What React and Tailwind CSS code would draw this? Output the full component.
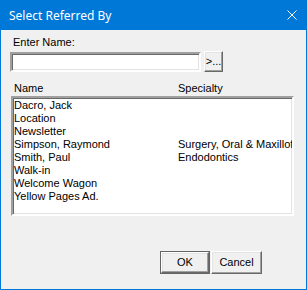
const items = [
  { name: "Dacro, Jack", specialty: "" },
  { name: "Location", specialty: "" },
  { name: "Newsletter", specialty: "" },
  { name: "Simpson, Raymond", specialty: "Surgery, Oral & Maxillofacial" },
  { name: "Smith, Paul", specialty: "Endodontics" },
  { name: "Walk-in", specialty: "" },
  { name: "Welcome Wagon", specialty: "" },
  { name: "Yellow Pages Ad.", specialty: "" },
];

const sunken =
  "border-2 border-t-[#a0a0a0] border-l-[#a0a0a0] border-b-white border-r-white shadow-[inset_1px_1px_0_#696969,inset_-1px_-1px_0_#e3e3e3]";
const raised =
  "border border-t-white border-l-white border-b-[#696969] border-r-[#696969] shadow-[inset_-1px_-1px_0_#a0a0a0,inset_1px_1px_0_#e3e3e3] bg-[#f0f0f0]";

const App = () => {
  return (
    <div className="w-[307px] h-[290px] flex flex-col bg-[#f0f0f0] border-x border-b border-[#0078d7] font-['Liberation_Sans',Arial,sans-serif] text-[11px] leading-[13px] text-black">
      <div className="h-[30px] shrink-0 -mx-px bg-[#0078d7] flex items-center justify-between pl-[9px] pr-[10px]">
        <span className="text-white text-[12px] font-['Noto_Sans',sans-serif]">Select Referred By</span>
        <svg width="10" height="10" viewBox="0 0 10 10" className="shrink-0">
          <path d="M0.5 0.5 L9.5 9.5 M9.5 0.5 L0.5 9.5" stroke="#fff" strokeWidth="1" />
        </svg>
      </div>

      <div className="flex flex-col pl-[9px] pr-[12px]">
        <div className="mt-[6px] pl-[3px]">Enter Name:</div>
        <div className="flex mt-[3px] items-start">
          <div className={`w-[191px] h-[20px] bg-white ${sunken}`}></div>
          <button className={`ml-[3px] -mt-px w-[19px] h-[21px] flex items-center justify-center text-[11px] ${raised}`}>
            &gt;...
          </button>
        </div>

        <div className="flex mt-[10px] pl-[4px]">
          <span className="w-[164px]">Name</span>
          <span>Specialty</span>
        </div>
        <div className={`mt-px ml-[1px] w-[283px] h-[120px] bg-white overflow-hidden pt-[1px] ${sunken}`}>
          {items.map((item) => (
            <div key={item.name} className="flex whitespace-nowrap pl-[1px]">
              <span className="w-[164px] shrink-0">{item.name}</span>
              <span>{item.specialty}</span>
            </div>
          ))}
        </div>

        <div className="flex justify-end gap-[1px] mt-[35px] pr-[32px]">
          <button className="w-[50px] h-[23px] border border-[#646464] flex">
            <span className={`flex-1 flex items-center justify-center ${raised}`}>OK</span>
          </button>
          <button className={`w-[51px] h-[23px] flex items-center justify-center ${raised}`}>Cancel</button>
        </div>
      </div>
    </div>
  );
};

export default App;
